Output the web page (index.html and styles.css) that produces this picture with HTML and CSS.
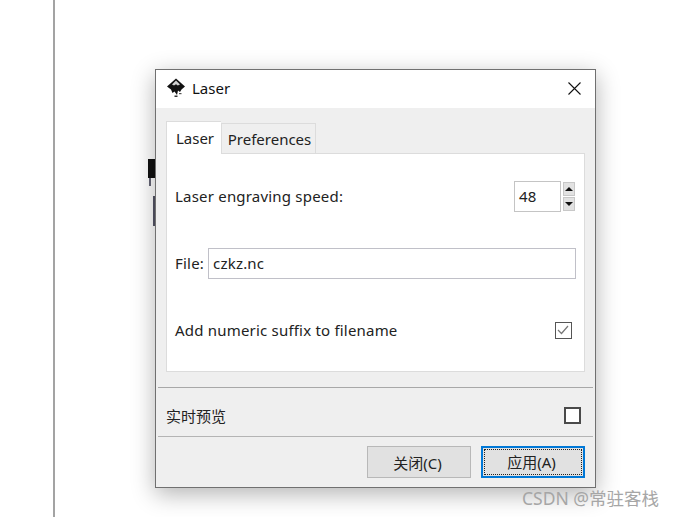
FILE: index.html
```html
<!DOCTYPE html>
<html>
    <head>
        <meta charset="utf-8">
        <title>Laser</title>
        <link rel="stylesheet" href="styles.css">
    </head>
    <body>
        <div class="page">
            <div class="smudge smudgeTop"></div>
            <div class="smudge smudgeDots"></div>
            <div class="smudge smudgeLow"></div>

            <div class="dialog">
                <div class="titlebar">
                    <svg class="appicon" width="20" height="20" viewBox="0 0 20 20">
                        <path d="M10 0.5 L19 8.5 L15.5 11.5 L14 14 L12 12.5 L11 17 L8.5 13.5 L6.5 15 L5 11.5 L1 8.5 Z" fill="#111"/>
                        <path d="M10 2.5 L14 6.5 L11.8 7.4 L10 6.3 L8 7.6 L6 6.5 Z" fill="#d0d0d0"/>
                        <rect x="8.5" y="17.5" width="3" height="1.5" fill="#333"/>
                        <rect x="13" y="15" width="2.5" height="1.2" fill="#555"/>
                    </svg>
                    <span class="title">Laser</span>
                    <svg class="closeicon" width="13" height="13" viewBox="0 0 13 13">
                        <path d="M0.5 0.5 L12.5 12.5 M12.5 0.5 L0.5 12.5" stroke="#111" stroke-width="1.1" fill="none"/>
                    </svg>
                </div>

                <div class="content">
                    <div class="tabs">
                        <div class="tab active">Laser</div>
                        <div class="tab">Preferences</div>
                    </div>
                    <div class="panel">
                        <div class="row rowSpeed">
                            <label>Laser engraving speed:</label>
                            <div class="spin">
                                <div class="spinvalue">48</div>
                                <div class="spinbtns">
                                    <div class="spinbtn"><span class="arrowup"></span></div>
                                    <div class="spinbtn"><span class="arrowdown"></span></div>
                                </div>
                            </div>
                        </div>
                        <div class="row rowFile">
                            <label>File:</label>
                            <div class="textbox">czkz.nc</div>
                        </div>
                        <div class="row rowSuffix">
                            <label>Add numeric suffix to filename</label>
                            <div class="check checkOn">
                                <svg width="14" height="14" viewBox="0 0 14 14">
                                    <path d="M2 7 L5.5 10.5 L12 3" stroke="#777" stroke-width="1.2" fill="none"/>
                                </svg>
                            </div>
                        </div>
                    </div>

                    <div class="preview">
                        <label>实时预览</label>
                        <div class="check checkEmpty"></div>
                    </div>

                    <div class="buttons">
                        <button class="button" type="button">关闭(C)</button>
                        <button class="button default" type="button"><span class="focusring">应用(A)</span></button>
                    </div>
                </div>
            </div>

            <div class="watermark">CSDN @常驻客栈</div>
        </div>
    </body>
</html>
```

FILE: styles.css
```css
html, body {
    margin: 0;
    height: 517px;
    overflow: hidden;
    background-color: #fff;
}
body {
    font-family: "Noto Sans", "Noto Sans CJK SC", sans-serif;
    font-size: 15px;
    color: #222;
}
.page {
    position: relative;
    height: 517px;
    margin-left: 53px;
    padding-left: 100px;
    padding-top: 69px;
    border-left: 2px solid #a3a3a3;
    box-sizing: border-box;
}
.smudge {
    position: absolute;
    left: 93px;
    width: 7px;
}
.smudgeTop {
    top: 159px;
    height: 19px;
    background-color: #111;
}
.smudgeDots {
    top: 178px;
    left: 94px;
    width: 2px;
    height: 8px;
    background-color: #667;
}
.smudgeLow {
    top: 196px;
    left: 98px;
    width: 2px;
    height: 30px;
    background-color: #556;
}
.dialog {
    position: relative;
    width: 441px;
    height: 419px;
    box-sizing: border-box;
    border: 1px solid #707070;
    background-color: #efefef;
    box-shadow: 0 6px 22px rgba(0, 0, 0, 0.3);
}
.titlebar {
    display: flex;
    align-items: center;
    height: 38px;
    padding-left: 10px;
    padding-right: 14px;
    padding-bottom: 2px;
    box-sizing: border-box;
    background-color: #fff;
}
.appicon {
    margin-right: 6px;
}
.title {
    flex: 1;
    color: #111;
}
.content {
    padding-top: 13px;
}
.tabs {
    display: flex;
    align-items: flex-end;
    height: 32px;
    padding-left: 10px;
}
.tab {
    height: 30px;
    width: 95px;
    line-height: 31px;
    padding-left: 2px;
    text-align: center;
    box-sizing: border-box;
    border: 1px solid #dcdcdc;
    border-bottom: none;
}
.tab.active {
    height: 33px;
    width: 55px;
    line-height: 33px;
    background-color: #fff;
    border-right: none;
    margin-bottom: -1px;
    position: relative;
}
.panel {
    height: 219px;
    margin-left: 10px;
    margin-right: 10px;
    box-sizing: border-box;
    border: 1px solid #dcdcdc;
    background-color: #fff;
    padding-left: 8px;
    padding-right: 8px;
}
.row {
    display: flex;
    align-items: center;
    letter-spacing: 0.2px;
}
.row label {
    flex: none;
}
.rowSpeed {
    justify-content: space-between;
    height: 30px;
    margin-top: 27px;
    padding-right: 1px;
}
.rowFile {
    height: 32px;
    margin-top: 36px;
}
.rowSuffix {
    justify-content: space-between;
    height: 20px;
    margin-top: 41px;
    padding-right: 4px;
}
.spin {
    display: flex;
    align-items: center;
}
.spinvalue {
    width: 47px;
    height: 31px;
    line-height: 29px;
    box-sizing: border-box;
    border: 1px solid #c4c4c4;
    padding-left: 4px;
    color: #222;
}
.spinbtns {
    display: flex;
    flex-direction: column;
    gap: 1px;
    margin-left: 2px;
}
.spinbtn {
    display: flex;
    align-items: center;
    justify-content: center;
    width: 12px;
    height: 14px;
    box-sizing: border-box;
    border: 1px solid #c8c8c8;
    background-color: #e2e2e2;
}
.arrowup, .arrowdown {
    width: 0;
    height: 0;
    border-left: 4px solid transparent;
    border-right: 4px solid transparent;
}
.arrowup {
    border-bottom: 4px solid #111;
}
.arrowdown {
    border-top: 4px solid #111;
}
.textbox {
    flex: 1;
    height: 31px;
    line-height: 29px;
    margin-left: 4px;
    padding-left: 4px;
    box-sizing: border-box;
    border: 1px solid #c0c0c8;
}
.check {
    width: 17px;
    height: 17px;
    box-sizing: border-box;
    border: 1px solid #444;
    background-color: #fff;
}
.check svg {
    display: block;
}
.checkOn {
    border-width: 1.5px;
    border-color: #555;
}
.checkEmpty {
    border-width: 2px;
    border-color: #4a4a4a;
}
.preview {
    display: flex;
    align-items: center;
    justify-content: space-between;
    height: 50px;
    margin: 15px 2px 0 2px;
    padding: 6px 12px 0 8px;
    box-sizing: border-box;
    border-top: 1px solid #a8a8a8;
    border-bottom: 1px solid #b4b4b4;
    color: #222;
}
.buttons {
    display: flex;
    justify-content: flex-end;
    gap: 10px;
    margin-top: 9px;
    padding-right: 10px;
}
.button {
    width: 104px;
    height: 32px;
    padding: 0 3px 0 0;
    box-sizing: border-box;
    border: 1px solid #b8b8b8;
    background-color: #e1e1e1;
    font-family: "Noto Sans", "Noto Sans CJK SC", sans-serif;
    font-size: 15px;
    color: #222;
}
.button.default {
    border: 2px solid #0078d7;
    padding: 1px;
}
.focusring {
    display: block;
    height: 100%;
    line-height: 24px;
    padding-right: 3px;
    box-sizing: border-box;
    border: 1px dotted #222;
}
.watermark {
    position: absolute;
    left: 467px;
    top: 487px;
    font-size: 17.5px;
    line-height: 22px;
    color: #a6a6a6;
}
```
